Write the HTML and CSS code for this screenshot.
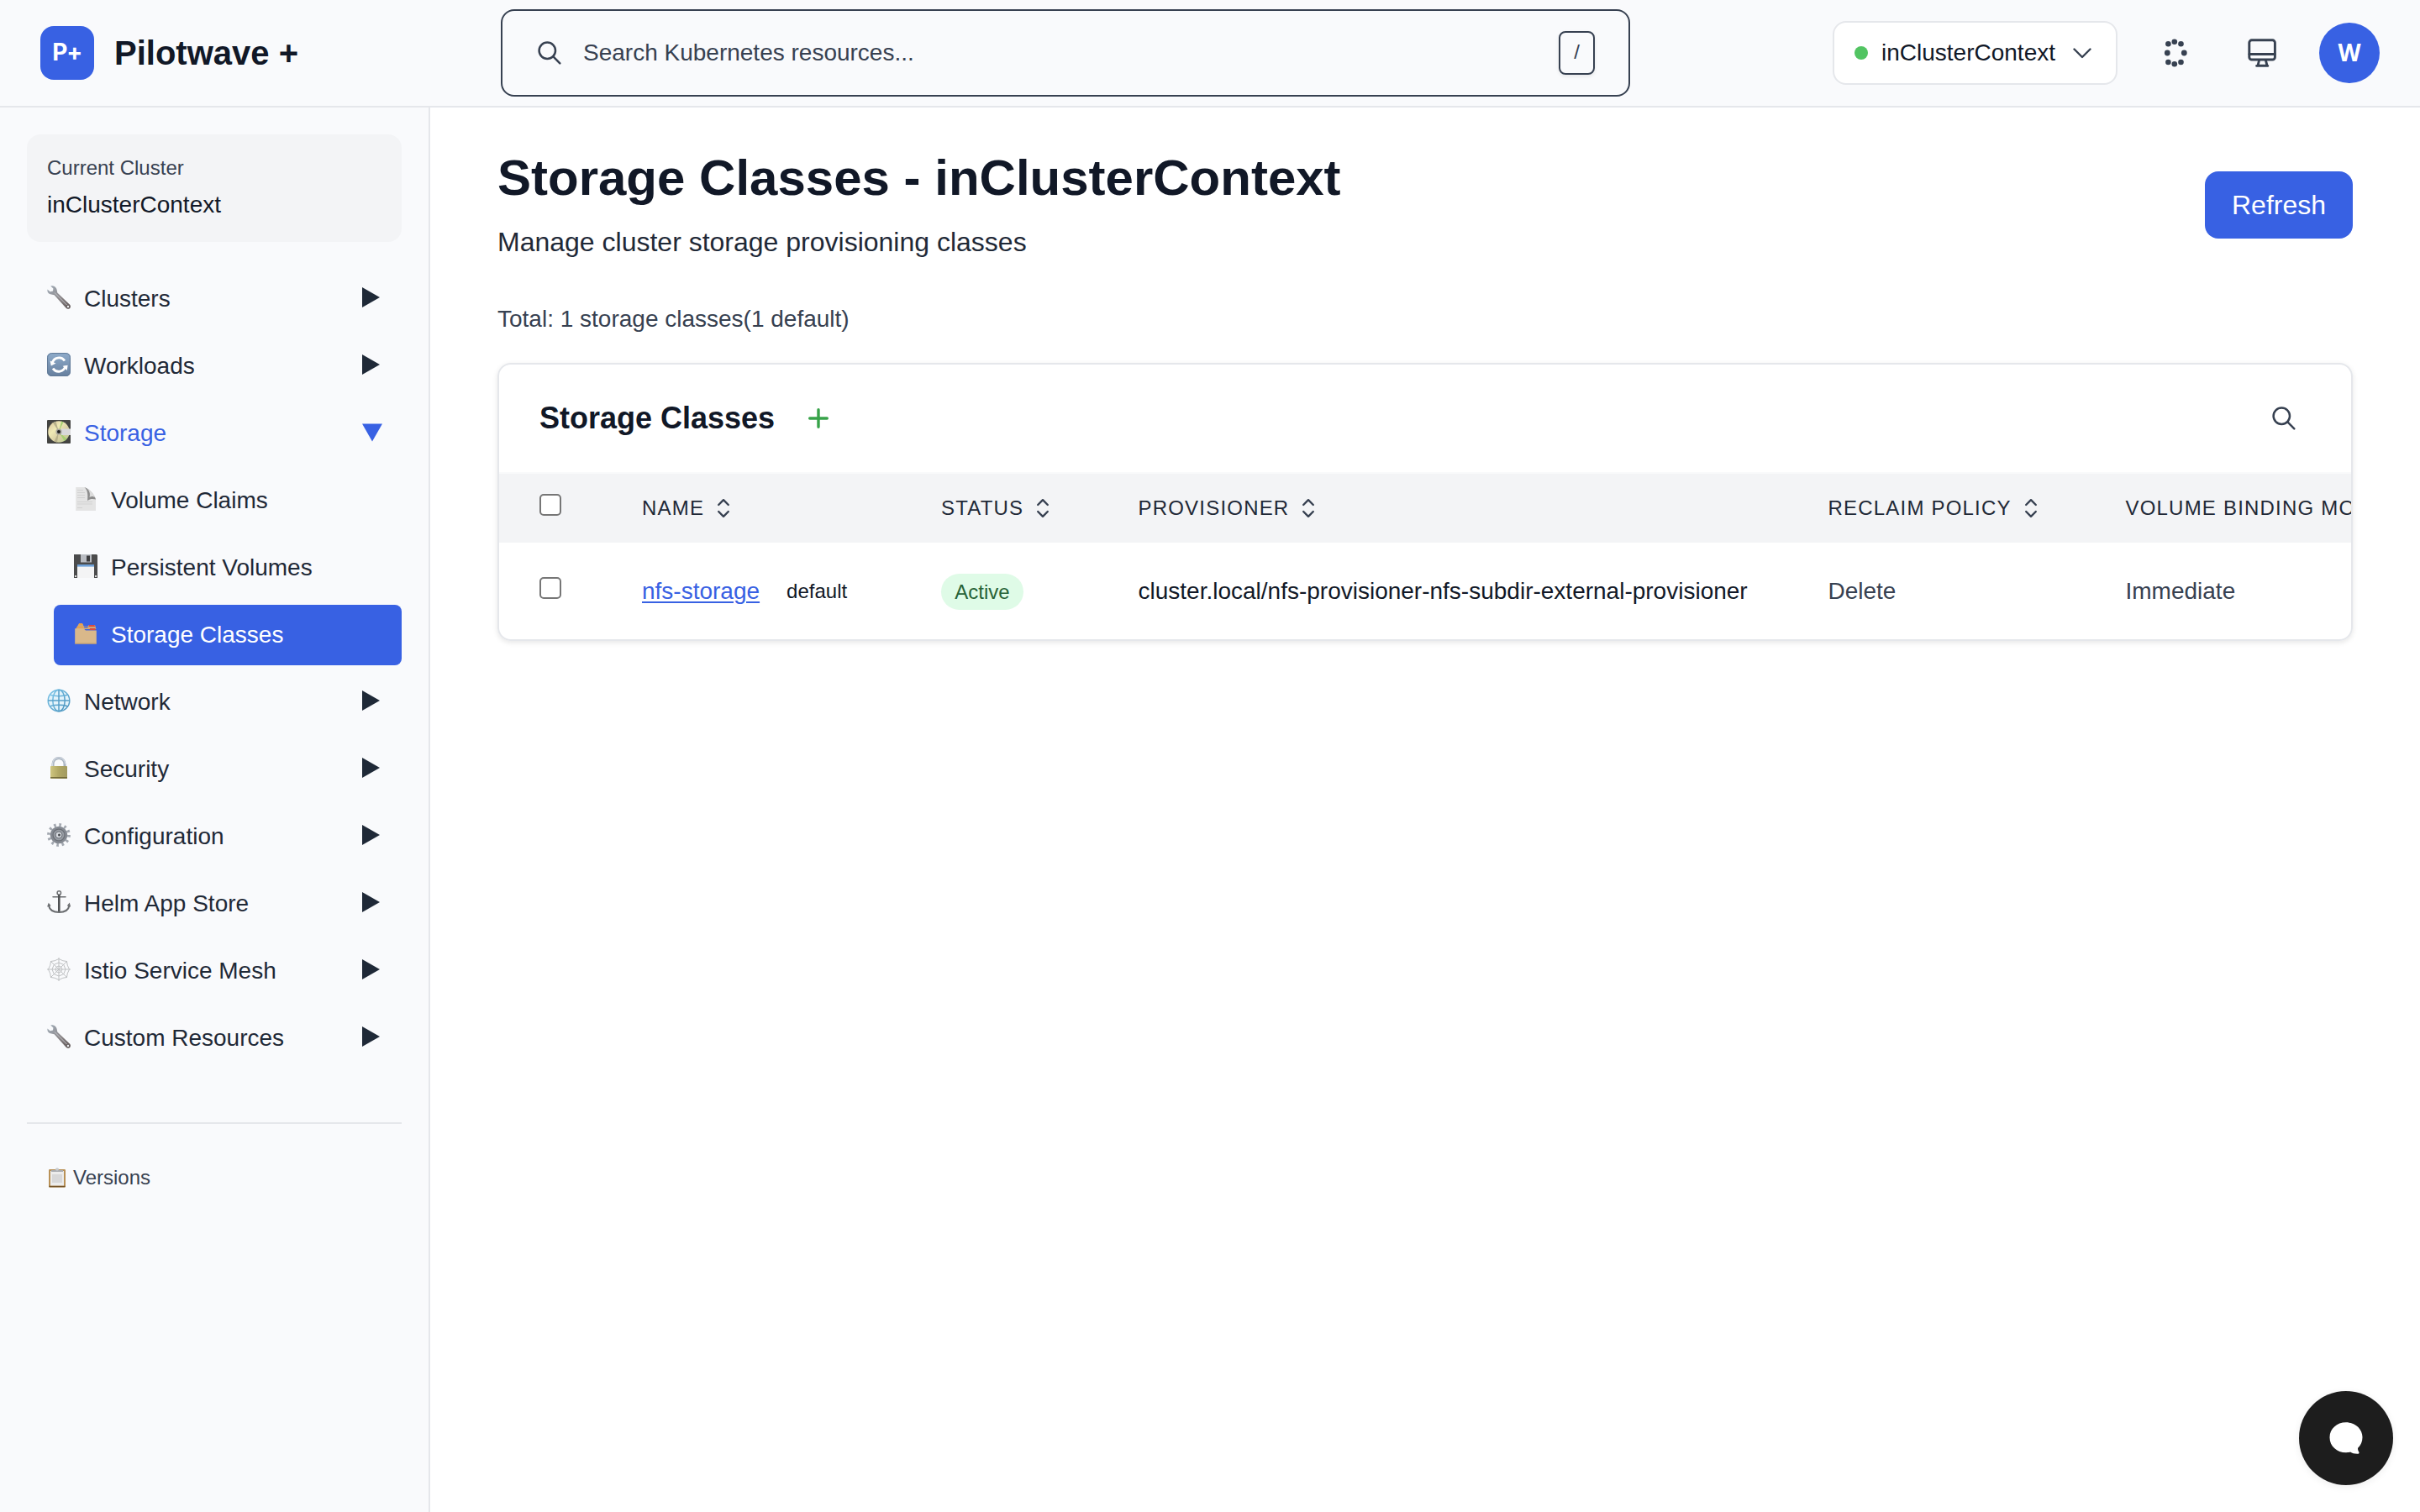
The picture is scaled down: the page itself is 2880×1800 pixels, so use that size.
FILE: index.html
```html
<!DOCTYPE html>
<html lang="en">
<head>
<meta charset="utf-8">
<title>Pilotwave + | Storage Classes</title>
<link rel="stylesheet" href="styles.css">
</head>
<body>
<svg class="defs" width="0" height="0" aria-hidden="true">
  <defs>
    <linearGradient id="steel" x1="0" y1="0" x2="1" y2="1">
      <stop offset="0" stop-color="#a3afbb"/><stop offset=".55" stop-color="#8b8688"/><stop offset="1" stop-color="#5d5352"/>
    </linearGradient>
    <linearGradient id="blueTile" x1="0" y1="0" x2="0" y2="1">
      <stop offset="0" stop-color="#8faccb"/><stop offset="1" stop-color="#667f9e"/>
    </linearGradient>
    <linearGradient id="disc" x1="0" y1="0" x2="1" y2="1">
      <stop offset="0" stop-color="#d8c29a"/><stop offset=".35" stop-color="#efe9b5"/><stop offset=".6" stop-color="#d9cfa5"/><stop offset="1" stop-color="#b9cf8e"/>
    </linearGradient>
    <linearGradient id="brass" x1="0" y1="0" x2="1" y2="0">
      <stop offset="0" stop-color="#cfc680"/><stop offset=".5" stop-color="#b0a763"/><stop offset="1" stop-color="#a29a60"/>
    </linearGradient>
    <linearGradient id="globe" x1="0" y1="0" x2="1" y2="1">
      <stop offset="0" stop-color="#7cc4e8"/><stop offset="1" stop-color="#4a93bd"/>
    </linearGradient>
    <symbol id="wrench" viewBox="0 0 28 28">
      <path d="M4.2.6 7.4 3.6 7 6.6 3.6 7.2.5 4.6C-.2 7.800 1.800 10.300 5 10.600L8.600 11.200 22.400 26.400C24 28.200 26.600 28 27.500 26.400 28.300 25 28 23.300 26.600 22.300L12.300 8.500 11.700 5.300C11.200 1.900 7.800-.5 4.200.6Z" fill="url(#steel)"/>
      <path d="M9 8.500 23.500 23" stroke="#c3c5ca" stroke-width="1" fill="none"/>
      <circle cx="25" cy="25" r="1.200" fill="#eceef0"/>
    </symbol>
    <symbol id="cycle" viewBox="0 0 28 28">
      <rect width="28" height="28" rx="5.500" fill="url(#blueTile)"/>
      <rect x=".6" y=".6" width="26.800" height="26.800" rx="5" fill="none" stroke="#5f7896" stroke-width="1"/>
      <path d="M6.200 12.200A8.200 8.200 0 0 1 21 9.600M21.800 15.800A8.200 8.200 0 0 1 7 18.600" fill="none" stroke="#fff" stroke-width="2.800"/>
      <path d="M3.600 9.500 4.800 15.500 10.500 12.600ZM24.600 14.700 18.600 15.800 23.800 21Z" fill="#fff"/>
    </symbol>
    <symbol id="minidisc" viewBox="0 0 28 28">
      <rect width="28" height="28" rx="1" fill="#444442"/>
      <circle cx="14" cy="14" r="12.800" fill="url(#disc)"/>
      <path d="M14 14 7 3.300A12.800 12.800 0 0 1 10.500 1.700ZM14 14 8.500 25.500A12.800 12.800 0 0 0 12 26.600Z" fill="#b7b08a"/>
      <path d="M14 14 17 1.600A12.800 12.800 0 0 1 19.500 2.500ZM14 14 23.500 22.500A12.800 12.800 0 0 1 20.500 25Z" fill="#a6cf72"/>
      <rect x="17" y="10.500" width="11" height="7.500" fill="#d9d9da"/>
      <circle cx="14" cy="14" r="3.600" fill="#a9a79f"/><circle cx="14" cy="14" r="2" fill="#222"/>
    </symbol>
    <symbol id="page" viewBox="0 0 28 28">
      <path d="M2.200 0H13.500L26 13V28H2.200Z" fill="#e4e4e4"/>
      <path d="M12.500 0C16 3 17 8 16 16 19 13.500 23 13.500 26 14.500 24.500 9 18.500 2 12.500 0Z" fill="#8c8c8c"/>
      <path d="M14.500 .8C19 4 19.500 8.500 18.500 12 21 10.500 23.500 11 25.500 12.500 23.500 8 19 2.800 14.500 .8Z" fill="#dcdcdc"/>
      <path d="M4 3.500H11M4 6.500H13M4 9.500H13M4 12.500H13M4 17.500H22M4 20H22M4 24.500H10" stroke="#d2d2d2" stroke-width="1"/>
    </symbol>
    <symbol id="floppy" viewBox="0 0 28 28">
      <path d="M0 0H27L28 1V28H0Z" fill="#4b4b4c"/>
      <rect x="8" y="0" width="13" height="9.500" fill="#b9bcc2"/><rect x="15" y="1.500" width="4" height="7" fill="#3c3c3e"/>
      <rect x="4" y="12" width="20" height="16" fill="#f4f4f5"/><rect x="4" y="12" width="20" height="2.600" fill="#6fa1d8"/>
      <path d="M1 25h2v2H1ZM25 25h2v2h-2Z" fill="#ddd"/>
    </symbol>
    <symbol id="dividers" viewBox="0 0 28 28">
      <path d="M2 9 5 4 6 2.200H10L11.500 5H17L18 4H25L26.500 9Z" fill="#cfa876"/>
      <path d="M5.500 4 6.200 2.200H10L10.800 4ZM4 5.800H10.500L11.500 7.600H3Z" fill="#f0a043"/>
      <path d="M18 4H24.500L25 6H17.500ZM19 8H25.500V10.200H18.500Z" fill="#dc4a3f"/>
      <path d="M11.500 5.400H17L16.200 7.200H12.500Z" fill="#3861e3"/>
      <path d="M1.200 8.300H11.500L14 10.600H26.800V26.600H1.200Z" fill="#d9b88a"/>
      <path d="M1.200 26H26.800" stroke="#c49d69" stroke-width="1" fill="none"/>
    </symbol>
    <symbol id="web-globe" viewBox="0 0 28 28">
      <g fill="none" stroke="url(#globe)" stroke-width="1.500">
        <circle cx="14" cy="14" r="12.800" fill="#e3f3fb"/>
        <ellipse cx="14" cy="14" rx="7.200" ry="12.800"/>
        <path d="M3.500 7.300Q14 10 24.500 7.300M3.500 20.700Q14 18 24.500 20.700"/>
      </g>
      <path d="M1.200 14H26.800M14 1.200V26.800" stroke="#559fc8" stroke-width="1.500"/>
    </symbol>
    <symbol id="padlock" viewBox="0 0 28 28">
      <path d="M7 13V9.500A7 7 0 0 1 21 9.500V13" fill="none" stroke="#a9b3c0" stroke-width="3"/>
      <path d="M6.500 12V9.500A7.500 7.500 0 0 1 21.500 9.500" fill="none" stroke="#d3dae3" stroke-width="1.200"/>
      <rect x="4" y="12" width="20" height="15" rx=".8" fill="url(#brass)"/>
      <path d="M4 25.800H24" stroke="#6c6535" stroke-width="1.400"/>
    </symbol>
    <symbol id="gear" viewBox="0 0 28 28">
      <circle cx="14" cy="14" r="12" fill="none" stroke="#a3a8b0" stroke-width="3.800" stroke-dasharray="2.600 3.684"/>
      <circle cx="14" cy="14" r="9" fill="#989da4" stroke="#858a92" stroke-width="2.600"/>
      <circle cx="14" cy="14" r="7" fill="none" stroke="#6d7178" stroke-width="1.400"/>
      <circle cx="14" cy="14" r="4" fill="#d4d8dd" stroke="#6a6e75" stroke-width="1"/>
      <circle cx="14.500" cy="14" r="1.500" fill="#45484d"/>
    </symbol>
    <symbol id="anchor" viewBox="0 0 28 28">
      <g fill="none" stroke="#6b6d70">
        <circle cx="14.300" cy="3" r="2.200" stroke-width="1.500"/>
        <path d="M7 7.800H22" stroke-width="1.500" stroke-linecap="round"/>
        <path d="M14.300 5V25" stroke-width="2.600" stroke="#505254"/>
        <path d="M2 18C3 23.500 8 26 14.300 26S25.500 23.500 26.500 18" stroke-width="2"/>
        <path d="M.8 19.500 2 16 4 18.500M24.500 18.500 26.500 16 27.500 19.500" stroke-width="1.300"/>
      </g>
    </symbol>
    <symbol id="spiderweb" viewBox="0 0 28 28">
      <g fill="none" stroke="#bfc1c3" stroke-width="1">
        <path d="M14 0V28M0 14H28M4 4 24 24M24 4 4 24"/>
        <path d="M14 1.500Q19 4.500 23.500 4.500 23.500 9 26.500 14 23.500 19 23.500 23.500 19 23.500 14 26.500 9 23.500 4.500 23.500 4.500 19 1.500 14 4.500 9 4.500 4.500 9 4.500 14 1.500Z"/>
        <path d="M14 6 19.700 8.300 22 14 19.700 19.700 14 22 8.300 19.700 6 14 8.300 8.300Z"/>
        <path d="M14 10 16.800 11.200 18 14 16.800 16.800 14 18 11.200 16.800 10 14 11.200 11.200Z"/>
      </g>
    </symbol>
    <symbol id="clipboard" viewBox="0 0 24 24">
      <rect x="2" y="2" width="20" height="21.500" rx="1.200" fill="#b99157"/>
      <path d="M2.500 22.500H21.500" stroke="#76562b" stroke-width="1.600"/>
      <rect x="4" y="4" width="16" height="17.500" fill="#ececec"/><rect x="6" y="8" width="12" height="10" fill="#d8d8d9"/>
      <path d="M5 5V3H9.500A2.600 2.600 0 0 1 14.500 3H19V5Z" fill="#a9acb0"/><circle cx="12" cy="2" r="1.800" fill="#c9cbce"/>
    </symbol>
    <symbol id="lens" viewBox="0 0 28 28">
      <g fill="none" stroke="#374151" stroke-width="2.500" stroke-linecap="round"><circle cx="11.300" cy="11.300" r="9.700"/><path d="M18.200 18.200 26.300 26.300"/></g>
    </symbol>
    <symbol id="sort" viewBox="0 0 16 24">
      <path d="M2.200 8 8 2.200 13.800 8M2.200 16 8 21.800 13.800 16" fill="none" stroke="#374151" stroke-width="2.400" stroke-linecap="round" stroke-linejoin="round"/>
    </symbol>
    <symbol id="right" viewBox="0 0 24 24"><path d="M0 0 21 12 0 24Z" fill="#1f2937"/></symbol>
    <symbol id="down" viewBox="0 0 24 24"><path d="M0 2.500H24L12 23.500Z" fill="#3861e3"/></symbol>
  </defs>
</svg>

<header class="topbar">
  <div class="brand">
    <div class="brand-mark">P+</div>
    <div class="brand-name">Pilotwave +</div>
  </div>
  <div class="search">
    <svg class="lens"><use href="#lens"/></svg>
    <span class="search-text">Search Kubernetes resources...</span>
    <kbd class="key">/</kbd>
  </div>
  <div class="tools">
    <div class="context">
      <span class="dot"></span>
      <span class="context-name">inClusterContext</span>
      <svg class="chevron" viewBox="0 0 22 13"><path d="M1.500 1.500 11 11 20.500 1.500" fill="none" stroke="#374151" stroke-width="2.400" stroke-linecap="round" stroke-linejoin="round"/></svg>
    </div>
    <svg class="theme" viewBox="0 0 40 40" fill="#374151">
      <circle cx="18.800" cy="6.800" r="3.300"/><circle cx="26.500" cy="9.200" r="3.300"/><circle cx="30.300" cy="20" r="3.400"/><circle cx="26.500" cy="31" r="3.300"/>
      <circle cx="18.800" cy="33.300" r="3.300"/><circle cx="11.400" cy="31" r="3.300"/><circle cx="10.300" cy="20" r="3.400"/><circle cx="11.400" cy="9.200" r="3.300"/>
    </svg>
    <svg class="monitor" viewBox="0 0 40 40" fill="none" stroke="#374151" stroke-width="2.900" stroke-linecap="round" stroke-linejoin="round">
      <rect x="4.800" y="4.800" width="30.600" height="23.200" rx="3"/>
      <path d="M5 21.500H35"/>
      <path d="M16.500 29 15 35.200H26L24.500 29M13.600 35.400H26.800"/>
    </svg>
    <div class="avatar">W</div>
  </div>
</header>

<div class="shell">
  <aside class="sidebar">
    <div class="cluster">
      <div class="cluster-label">Current Cluster</div>
      <div class="cluster-name">inClusterContext</div>
    </div>
    <nav class="nav">
      <a class="item"><svg class="emoji"><use href="#wrench"/></svg><span class="label">Clusters</span><svg class="arrow"><use href="#right"/></svg></a>
      <a class="item"><svg class="emoji"><use href="#cycle"/></svg><span class="label">Workloads</span><svg class="arrow"><use href="#right"/></svg></a>
      <a class="item item-open"><svg class="emoji"><use href="#minidisc"/></svg><span class="label">Storage</span><svg class="arrow"><use href="#down"/></svg></a>
      <div class="subnav">
        <a class="item"><svg class="emoji"><use href="#page"/></svg><span class="label">Volume Claims</span></a>
        <a class="item"><svg class="emoji"><use href="#floppy"/></svg><span class="label">Persistent Volumes</span></a>
        <a class="item item-active"><svg class="emoji"><use href="#dividers"/></svg><span class="label">Storage Classes</span></a>
      </div>
      <a class="item"><svg class="emoji"><use href="#web-globe"/></svg><span class="label">Network</span><svg class="arrow"><use href="#right"/></svg></a>
      <a class="item"><svg class="emoji"><use href="#padlock"/></svg><span class="label">Security</span><svg class="arrow"><use href="#right"/></svg></a>
      <a class="item"><svg class="emoji"><use href="#gear"/></svg><span class="label">Configuration</span><svg class="arrow"><use href="#right"/></svg></a>
      <a class="item"><svg class="emoji"><use href="#anchor"/></svg><span class="label">Helm App Store</span><svg class="arrow"><use href="#right"/></svg></a>
      <a class="item"><svg class="emoji"><use href="#spiderweb"/></svg><span class="label">Istio Service Mesh</span><svg class="arrow"><use href="#right"/></svg></a>
      <a class="item"><svg class="emoji"><use href="#wrench"/></svg><span class="label">Custom Resources</span><svg class="arrow"><use href="#right"/></svg></a>
    </nav>
    <div class="versions">
      <svg class="clip"><use href="#clipboard"/></svg><span>Versions</span>
    </div>
  </aside>

  <main class="main">
    <div class="page-head">
      <div>
        <h1 class="title">Storage Classes - inClusterContext</h1>
        <p class="subtitle">Manage cluster storage provisioning classes</p>
      </div>
      <button class="refresh">Refresh</button>
    </div>
    <p class="total">Total: 1 storage classes(1 default)</p>
    <section class="card">
      <div class="card-head">
        <h2 class="card-title">Storage Classes</h2>
        <svg class="plus" viewBox="0 0 24 24"><path d="M12 1.700V22.300M1.700 12H22.300" stroke="#37a349" stroke-width="3.400" stroke-linecap="round"/></svg>
        <svg class="lens"><use href="#lens"/></svg>
      </div>
      <div class="grid grid-head">
        <span class="box"></span>
        <span class="th">NAME<svg class="sort"><use href="#sort"/></svg></span>
        <span class="th">STATUS<svg class="sort"><use href="#sort"/></svg></span>
        <span class="th">PROVISIONER<svg class="sort"><use href="#sort"/></svg></span>
        <span class="th">RECLAIM POLICY<svg class="sort"><use href="#sort"/></svg></span>
        <span class="th">VOLUME BINDING MODE</span>
      </div>
      <div class="grid grid-row">
        <span class="box"></span>
        <span class="name"><a class="link">nfs-storage</a><span class="tag">default</span></span>
        <span><span class="pill">Active</span></span>
        <span class="strong">cluster.local/nfs-provisioner-nfs-subdir-external-provisioner</span>
        <span>Delete</span>
        <span>Immediate</span>
      </div>
    </section>
  </main>
</div>

<button class="chat" aria-label="Chat">
  <svg class="bubble" viewBox="0 0 40 38"><path d="M20 .3C31 .3 39.500 8 39.500 18 39.500 23.500 37.500 27.500 34 31 34 33 34.500 34.500 35.500 36 35.800 37 35 37.700 33.500 37.700 29.500 37.700 27.500 37 25 35.500 23.500 36 22 36.200 20 36.200 9 36.200.5 28.500.5 18.200.5 8 9 .3 20 .3Z" fill="#fff"/></svg>
</button>
</body>
</html>
```
FILE: styles.css
```css
* { box-sizing: border-box; }
body {
  margin: 0;
  height: 1800px;
  overflow: hidden;
  background: #fff;
  color: #111827;
  font-family: "Liberation Sans", Arial, sans-serif;
  font-size: 28px;
  line-height: 40px;
}
h1, h2, p { margin: 0; }
svg { display: block; flex: none; }
.defs { position: absolute; }

.topbar {
  display: flex;
  align-items: center;
  height: 128px;
  border-bottom: 2px solid #e5e7eb;
  background: #f9fafc;
}
.brand { display: flex; align-items: center; width: 596px; padding-left: 48px; gap: 24px; }
.brand-mark {
  width: 64px;
  height: 64px;
  border-radius: 16px;
  background: #3861e3;
  color: #fff;
  font: 700 28px/62px Inter, sans-serif;
  letter-spacing: -.5px;
  text-align: center;
}
.brand-name { font-size: 40px; font-weight: 700; }
.search {
  display: flex;
  align-items: center;
  width: 1344px;
  height: 104px;
  padding: 0 40px 0 42px;
  border: 2px solid #374151;
  border-radius: 16px;
  color: #374151;
}
.lens { width: 28px; height: 28px; }
.search-text { flex: 1; margin-left: 26px; }
.key {
  width: 43px;
  height: 52px;
  border: 2px solid #374151;
  border-radius: 8px;
  font: 24px/46px "Liberation Sans", Arial, sans-serif;
  text-align: center;
  box-shadow: 0 2px 4px rgba(0, 0, 0, .08);
}
.tools { display: flex; align-items: center; margin-left: 241px; }
.context {
  display: flex;
  align-items: center;
  width: 339px;
  height: 76px;
  padding: 0 24px;
  border: 2px solid #e5e7eb;
  border-radius: 16px;
  background: #fff;
}
.dot { width: 16px; height: 16px; border-radius: 50%; background: #52c462; }
.context-name { flex: 1; margin-left: 16px; }
.chevron { width: 22px; height: 13px; margin-right: 5px; }
.theme { width: 40px; height: 40px; margin-left: 49px; }
.monitor { width: 40px; height: 40px; margin-left: 63px; }
.avatar {
  width: 72px;
  height: 72px;
  margin-left: 48px;
  border-radius: 50%;
  background: #3861e3;
  color: #fff;
  font: 700 28px/70px "Open Sans", "Noto Sans", sans-serif;
  text-align: center;
}

.shell { display: flex; height: 1672px; }
.sidebar {
  width: 512px;
  padding: 32px;
  border-right: 2px solid #e5e7eb;
  background: #f9fafc;
}
.cluster {
  height: 128px;
  padding: 20px 24px;
  border-radius: 16px;
  background: #f3f4f6;
}
.cluster-label { color: #374151; font-size: 24px; line-height: 40px; }
.cluster-name { line-height: 40px; padding-top: 4px; }
.nav { display: flex; flex-direction: column; gap: 8px; margin-top: 32px; color: #1f2937; }
.subnav { display: flex; flex-direction: column; gap: 8px; margin-left: 32px; }
.item { display: flex; align-items: center; height: 72px; padding: 0 23px 0 24px; border-radius: 8px; }
.emoji { width: 28px; height: 28px; margin-top: -4px; }
.label { flex: 1; margin-left: 16px; }
.arrow { width: 24px; height: 24px; margin-top: -4px; }
.item-open { color: #3861e3; }
.item-active { background: #3861e3; color: #fff; }
.versions {
  display: flex;
  align-items: center;
  margin-top: 64px;
  padding: 44px 24px 0;
  border-top: 2px solid #e5e7eb;
  color: #374151;
  font-size: 24px;
}
.clip { width: 24px; height: 24px; margin-right: 7px; }

.main { flex: 1; min-width: 0; padding: 46px 80px 0; }
.page-head { display: flex; justify-content: space-between; align-items: center; }
.title { font-size: 60px; line-height: 76px; }
.subtitle { margin-top: 14px; color: #1f2937; font-size: 32px; line-height: 48px; }
.refresh {
  width: 176px;
  height: 80px;
  margin-top: 2px;
  padding: 0;
  border: 0;
  border-radius: 16px;
  background: #3861e3;
  color: #fff;
  font: 32px/80px "Liberation Sans", Arial, sans-serif;
}
.total { margin-top: 48px; color: #374151; }
.card {
  height: 331px;
  margin-top: 32px;
  border: 2px solid #e5e7eb;
  border-radius: 16px;
  overflow: hidden;
  box-shadow: 0 2px 6px rgba(0, 0, 0, .1);
}
.card-head { display: flex; align-items: center; height: 130px; padding: 0 66px 0 48px; border-bottom: 2px solid #f9fafb; }
.card-title { font-size: 36px; line-height: 48px; }
.plus { width: 24px; height: 24px; margin: 0 auto 0 40px; }
.grid {
  display: grid;
  grid-template-columns: 122px 356px 234.500px 821px 354px 400px;
  align-items: center;
  padding-left: 48px;
  white-space: nowrap;
}
.grid-head { height: 82px; background: #f3f4f6; color: #1f2937; font-size: 24px; letter-spacing: 1.2px; }
.grid-row { height: 115px; color: #374151; }
.box { width: 26px; height: 26px; margin-top: -8px; border: 2px solid #767676; border-radius: 5px; background: #fff; }
.th { display: flex; align-items: center; }
.sort { width: 16px; height: 24px; margin-left: 15px; }
.name { display: flex; align-items: center; }
.link { color: #3861e3; text-decoration: underline; text-decoration-thickness: 2px; text-underline-offset: 3px; }
.tag { margin-left: 32px; color: #111827; font-size: 24px; }
.pill {
  display: block;
  width: 98px;
  height: 43px;
  margin-top: 2px;
  border-radius: 22px;
  background: #dffbe7;
  color: #276338;
  font-size: 24px;
  line-height: 43px;
  text-align: center;
}
.strong { color: #111827; }

.chat {
  position: absolute;
  left: 2736px;
  top: 1656px;
  display: flex;
  align-items: center;
  justify-content: center;
  width: 112px;
  height: 112px;
  padding: 0;
  border: 0;
  border-radius: 50%;
  background: #1d1d1d;
  box-shadow: 0 2px 10px rgba(0, 0, 0, .07);
}
.bubble { width: 40px; height: 38px; }
```
